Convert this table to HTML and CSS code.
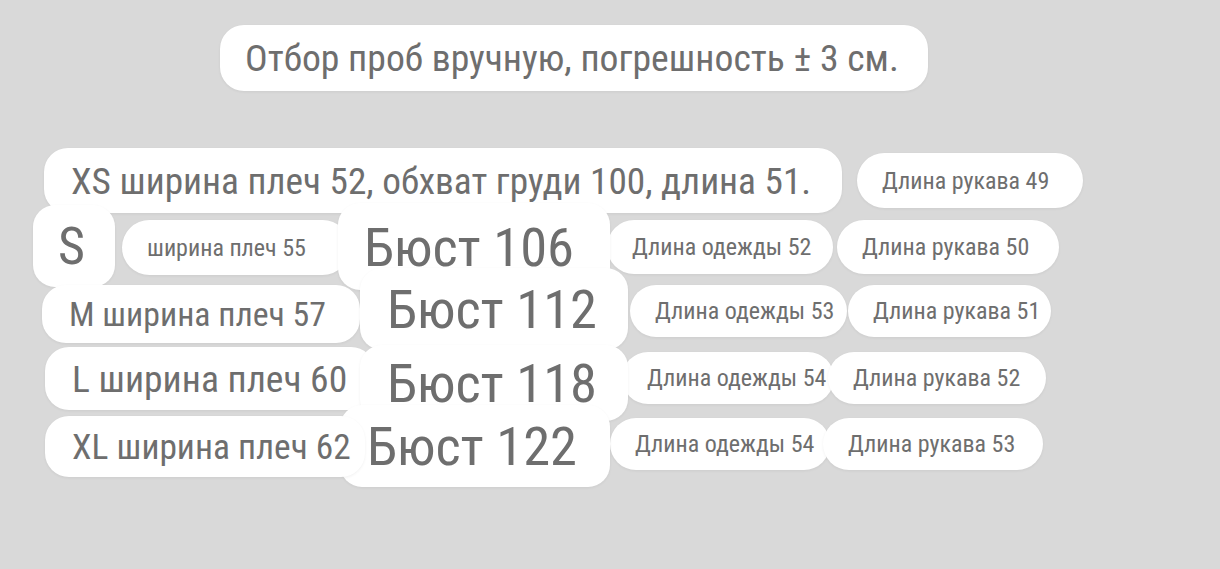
FILE: index.html
```html
<!DOCTYPE html>
<html lang="ru">
<head>
  <meta charset="UTF-8">
  <meta name="viewport" content="width=device-width, initial-scale=1.0">
  <title>Размерная сетка</title>
  <link rel="stylesheet" href="styles.css">
</head>
<body>
  <div class="canvas">
    <div class="tag tag-title">Отбор проб вручную, погрешность ± 3 см.</div>

    <div class="tag tag-xs">XS ширина плеч 52, обхват груди 100, длина 51.</div>
    <div class="tag sm tag-xs-sleeve">Длина рукава 49</div>

    <div class="tag tag-s">S</div>
    <div class="tag sm tag-s-shoulder">ширина плеч 55</div>
    <div class="tag sm tag-s-length">Длина одежды 52</div>
    <div class="tag sm tag-s-sleeve">Длина рукава 50</div>

    <div class="tag tag-m">M ширина плеч 57</div>
    <div class="tag sm tag-m-length">Длина одежды 53</div>
    <div class="tag sm tag-m-sleeve">Длина рукава 51</div>

    <div class="tag tag-l">L ширина плеч 60</div>
    <div class="tag sm tag-l-length">Длина одежды 54</div>
    <div class="tag sm tag-l-sleeve">Длина рукава 52</div>

    <div class="tag tag-xl">XL ширина плеч 62</div>
    <div class="tag sm tag-xl-length">Длина одежды 54</div>
    <div class="tag sm tag-xl-sleeve">Длина рукава 53</div>

    <div class="tag big tag-bust1">Бюст 106</div>
    <div class="tag big tag-bust2">Бюст 112</div>
    <div class="tag big tag-bust3">Бюст 118</div>
    <div class="tag big tag-bust4">Бюст 122</div>
  </div>
</body>
</html>
```

FILE: styles.css
```css
body {
  margin: 0;
  background-color: #d9d9d9;
  font-family: Roboto, "Noto Sans", sans-serif;
  font-stretch: 75%;
  color: #6e6e6e;
}
.canvas {
  position: relative;
  width: 1220px;
  height: 569px;
  overflow: hidden;
}
.tag {
  position: absolute;
  display: flex;
  align-items: center;
  box-sizing: border-box;
  padding-left: 27px;
  background-color: #fff;
  border-radius: 24px;
  box-shadow: 0 1px 3px rgba(0, 0, 0, 0.06);
  font-size: 37px;
  white-space: nowrap;
}
.tag.sm {
  font-size: 24px;
  padding-left: 25px;
  border-radius: 28px;
}
.tag.big {
  font-size: 54.5px;
  border-radius: 22px;
  z-index: 2;
}

.tag-title { left: 220px; top: 25px; width: 708px; height: 66px; padding-left: 25px; font-size: 37.7px; }
.tag-xs { left: 44px; top: 148px; width: 798px; height: 65px; font-size: 37.3px; }
.tag-xs-sleeve { left: 857px; top: 153px; width: 226px; height: 55px; padding-left: 26px; font-size: 24.4px; }

.tag-s { left: 33px; top: 205px; width: 82px; height: 82px; padding-left: 25px; font-size: 52px; border-radius: 22px; }
.tag-s-shoulder { left: 122px; top: 220px; width: 228px; height: 55px; padding-left: 27px; font-size: 26.1px; }
.tag-s-length { left: 607px; top: 220px; width: 226px; height: 54px; padding-left: 24px; font-size: 23.3px; }
.tag-s-sleeve { left: 837px; top: 220px; width: 222px; height: 54px; padding-left: 26px; }

.tag-m { left: 42px; top: 285px; width: 318px; height: 58px; font-size: 33.8px; }
.tag-m-length { left: 630px; top: 285px; width: 217px; height: 52px; padding-left: 25px; font-size: 22.2px; }
.tag-m-sleeve { left: 848px; top: 285px; width: 203px; height: 52px; padding-left: 23px; font-size: 21.7px; }

.tag-l { left: 45px; top: 347px; width: 330px; height: 63px; font-size: 37.6px; }
.tag-l-length { left: 622px; top: 352px; width: 212px; height: 52px; padding-left: 21px; font-size: 22.2px; }
.tag-l-sleeve { left: 828px; top: 352px; width: 218px; height: 52px; padding-left: 23px; }

.tag-xl { left: 45px; top: 416px; width: 320px; height: 61px; font-size: 35.4px; z-index: 3; }
.tag-xl-length { left: 610px; top: 418px; width: 220px; height: 52px; padding-left: 25px; font-size: 22.9px; }
.tag-xl-sleeve { left: 823px; top: 418px; width: 220px; height: 52px; padding-left: 24px; }

.tag-bust1 { left: 338px; top: 203px; width: 272px; height: 87px; padding-left: 26px; font-size: 55.3px; }
.tag-bust2 { left: 360px; top: 268px; width: 268px; height: 82px; }
.tag-bust3 { left: 360px; top: 345px; width: 268px; height: 76px; }
.tag-bust4 { left: 340px; top: 405px; width: 270px; height: 82px; }
```
